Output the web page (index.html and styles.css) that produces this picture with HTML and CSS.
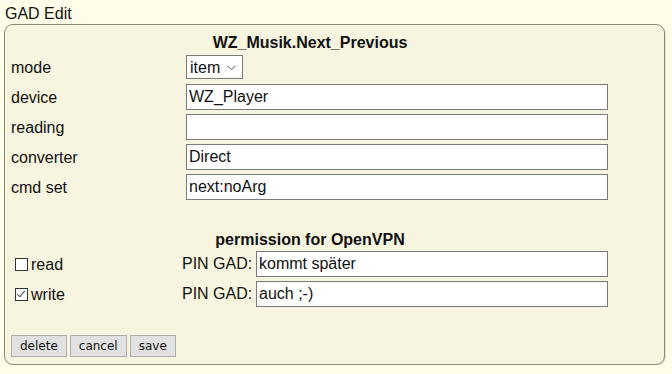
FILE: index.html
```html
<!DOCTYPE html>
<html lang="de">
<head>
  <meta charset="UTF-8" />
  <title>GAD Edit</title>
  <link rel="stylesheet" href="styles.css">
</head>
<body>

  <div class="caption">GAD Edit</div>
  <form class="panel" id="gadForm">
    <div class="title">WZ_Musik.Next_Previous</div>

    <div class="row">
      <label>mode</label>
      <span class="select-wrap">
        <select name="mode">
          <option>item</option>
          <option>switch</option>
        </select>
        <svg class="chev" width="9" height="6" viewBox="0 0 9 6"><path d="M0.5 0.8 L4.5 4.8 L8.5 0.8" fill="none" stroke="#555" stroke-width="1"/></svg>
      </span>
    </div>
    <div class="row">
      <label>device</label>
      <input type="text" name="device" value="WZ_Player" />
    </div>
    <div class="row">
      <label>reading</label>
      <input type="text" name="reading" value="" />
    </div>
    <div class="row">
      <label>converter</label>
      <input type="text" name="converter" value="Direct" />
    </div>
    <div class="row">
      <label>cmd set</label>
      <input type="text" name="cmdset" value="next:noArg" />
    </div>

    <div class="title perm">permission for OpenVPN</div>

    <div class="row prow">
      <label class="check"><input type="checkbox" name="read" />read</label>
      <span class="pin">PIN GAD:</span>
      <input type="text" name="pinRead" value="kommt später" />
    </div>
    <div class="row prow">
      <label class="check"><input type="checkbox" name="write" checked />write</label>
      <span class="pin">PIN GAD:</span>
      <input type="text" name="pinWrite" value="auch ;-)" />
    </div>

    <div class="buttons">
      <button type="button">delete</button>
      <button type="button">cancel</button>
      <button type="submit">save</button>
    </div>
  </form>

</body>
</html>
```

FILE: styles.css
```css
body { margin: 0; padding: 4px 0 0 4px; background: #fefde9; font-family: "Liberation Sans", Arial, sans-serif; font-size: 16px; color: #111; }
.caption { line-height: 20px; padding-left: 1px; }

.panel { box-sizing: border-box; width: 661px; margin: 0; padding: 8px 0 7px 3px; background: #f7f5df; border: 1px solid #8c8a78; border-radius: 9px; box-shadow: 1px 1px 1px rgba(0,0,0,0.12); }
.title { width: 604px; text-align: center; font-weight: bold; line-height: 19px; }
.title.perm { padding-top: 28px; }

.row { display: flex; align-items: center; height: 30px; }
.row > label { width: 175px; padding-left: 3px; padding-top: 1px; }
.row input[type=text] { box-sizing: border-box; width: 422px; height: 26px; margin: 0; padding: 0 2px; border: 1px solid #7a7a7a; background: #fff; font: 16px "Liberation Sans", Arial, sans-serif; color: #111; }

.select-wrap { position: relative; display: inline-block; }
.select-wrap select { appearance: none; -webkit-appearance: none; box-sizing: border-box; width: 57px; height: 24px; padding: 0 0 0 3px; border: 1px solid #7a7a7a; background: #fff; font: 16px "Liberation Sans", Arial, sans-serif; color: #111; }
.chev { position: absolute; left: 41px; top: 10px; pointer-events: none; }

.prow > label.check { width: 168px; padding-left: 3px; display: flex; align-items: center; }
.check input { appearance: none; -webkit-appearance: none; position: relative; box-sizing: border-box; width: 13px; height: 13px; margin: 0 3px 0 4px; border: 1px solid #333; background: #fff; }
.check input:checked::after { content: ""; position: absolute; left: 3px; top: 0px; width: 3px; height: 7px; border: solid #444; border-width: 0 1px 1px 0; transform: rotate(40deg); }
.pin { width: 74px; padding-left: 3px; }
.prow input[type=text] { width: 352px; }

.buttons { display: flex; gap: 3px; margin-top: 26px; padding-left: 3px; }
.buttons button { height: 22px; padding: 0 8px; background: #e1e1e1; border: 1px solid #adadad; font: 12px "DejaVu Sans", Tahoma, sans-serif; color: #111; }
```
